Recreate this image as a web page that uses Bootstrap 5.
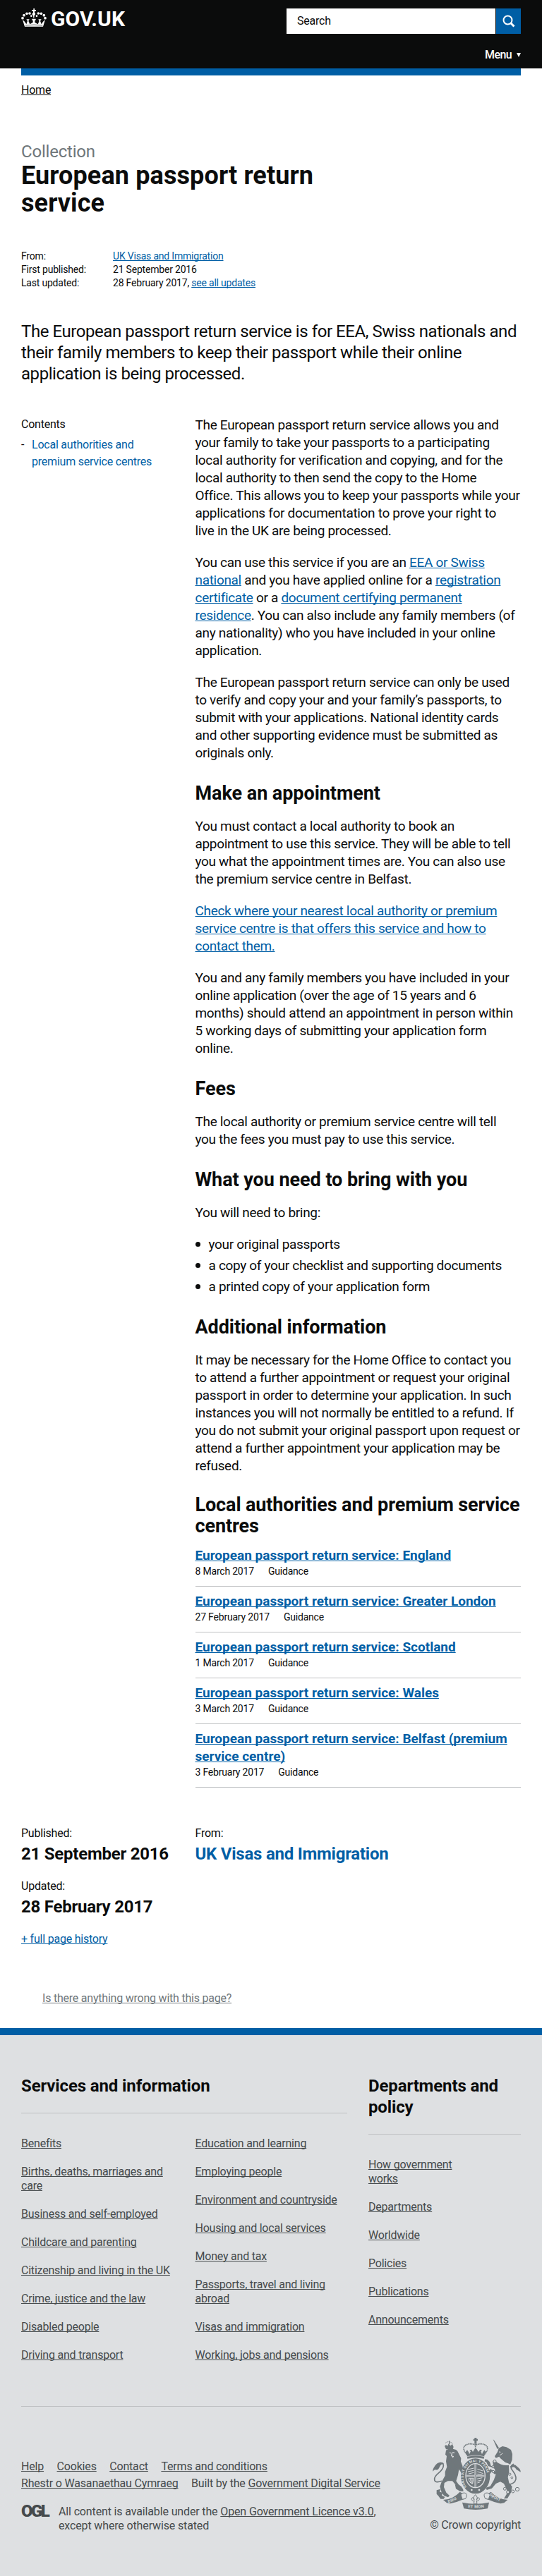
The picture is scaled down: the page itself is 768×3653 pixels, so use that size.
<!DOCTYPE html>
<html lang="en">
<head>
<meta charset="utf-8">
<meta name="viewport" content="width=device-width, initial-scale=1">
<title>European passport return service - GOV.UK</title>
<link href="https://cdn.jsdelivr.net/npm/bootstrap@5.3.0/dist/css/bootstrap.min.css" rel="stylesheet">
<script src="https://cdn.jsdelivr.net/npm/bootstrap@5.3.0/dist/js/bootstrap.bundle.min.js" defer></script>
<style>
  body { font-family: Roboto, "Liberation Sans", Arial, sans-serif; font-size: 16px; line-height: 20px; letter-spacing: -.22px; color: #0b0c0c; background: #fff; }
  a { color: #005ea5; text-decoration-skip-ink: none; text-decoration-thickness: 1px; }
  h1, h2, p, ul, dl, dd, dt { margin: 0; font-weight: inherit; }
  .wrap { margin: 0 30px; }
  .site-header { height: 97px; background: #0b0c0c; color: #fff; }
  .site-header .wrap { padding-top: 12px; }
  .wordmark { font-size: 30px; line-height: 29px; font-weight: 700; letter-spacing: .05px; margin-left: 6px; color: #fff; }
  .search-box { width: 332px; height: 36px; gap: 1px; }
  .search-input { background: #fff; color: #0b0c0c; padding: 0 15px; }
  .search-button { width: 35px; background: #005ea5; }
  .menu-toggle { margin-top: 20px; font-weight: 500; letter-spacing: -.6px; }
  .menu-arrow { width: 6px; height: 6px; margin-left: 7px; }
  .blue-bar { height: 10px; background: #005ea5; }
  .breadcrumbs { padding-top: 11px; }
  .breadcrumbs a { color: #0b0c0c; }
  .context { margin-top: 62px; font-size: 24px; line-height: 30px; color: #6f777b; letter-spacing: -.2px; }
  h1 { font-size: 36px; line-height: 39px; font-weight: 700; letter-spacing: .11px; }
  .facts { margin-top: 46px; font-size: 14px; line-height: 19px; letter-spacing: -.2px; }
  .facts dt { width: 130px; }
  .intro { margin-top: 44px; font-size: 24px; line-height: 30px; letter-spacing: -.44px; white-space: nowrap; }
  .side { width: 246.5px; flex: none; }
  .main { width: 461.5px; flex: none; white-space: nowrap; }
  .document { margin-top: 45px; }
  .contents-title { padding-top: 2px; }
  .contents-list { margin-top: 7px; line-height: 24.3px; }
  .contents-list li::before { content: "-"; display: inline-block; width: 15px; margin-left: -15px; color: #0b0c0c; }
  .contents-list li { padding-left: 15px; }
  .contents-list a { text-decoration: none; }
  .prose { font-size: 19px; line-height: 25px; letter-spacing: -.32px; }
  .prose p + p, .prose ul { margin-top: 20px; }
  .h-main { font-size: 27px; line-height: 30px; font-weight: 700; letter-spacing: -.06px; margin: 30px 0 19px; }
  .prose li { margin-bottom: 5px; padding-left: 19px; position: relative; }
  .prose li::before { content: ""; position: absolute; left: 0; top: 9px; width: 7px; height: 7px; border-radius: 50%; background: #0b0c0c; }
  .h-main.group-title { margin: 28px 0 14px; letter-spacing: -.12px; }
  .doc-item { border-bottom: 1px solid #bfc1c3; padding: 8px 0 11px; }
  .doc-item:first-child { padding-top: 0; }
  .doc-title { line-height: 25px; font-size: 19px; font-weight: 700; letter-spacing: 0; }
  .doc-facts { font-size: 14px; line-height: 20px; letter-spacing: -.2px; display: flex; gap: 20px; }
  .history { margin-top: 55px; }
  .big-fact { font-size: 24px; line-height: 30px; font-weight: 700; letter-spacing: -.24px; margin: 4px 0 21px; }
  .big-fact a { text-decoration: none; }
  .problem { margin: 64px 0 32px 60px; }
  .problem a { color: #6f777b; }
  .site-footer { border-top: 10px solid #005ea5; background: #dee0e2; color: #454a4c; padding: 57px 0 61px; white-space: nowrap; }
  .site-footer a { color: #454a4c; }
  .site-footer h2 { color: #0b0c0c; font-size: 24px; line-height: 30px; font-weight: 700; letter-spacing: -.13px; padding-bottom: 23px; border-bottom: 1px solid #bfc1c3; margin-bottom: 33px; }
  .services { width: 461.5px; }
  .policy { width: 216px; }
  .foot-links li + li { margin-top: 20px; }
  .foot-col { width: 246.5px; }
  .foot-meta { border-top: 1px solid #bfc1c3; margin-top: 62px; padding-top: 44px; }
  .meta-links { padding-top: 29px; line-height: 24px; letter-spacing: -.18px; }
  .meta-links > div { gap: 18.5px; }
  .licence { margin-top: 18px; letter-spacing: -.14px; }
  .ogl { width: 53px; font-size: 24px; font-weight: 900; letter-spacing: -2.6px; line-height: 19px; }
  .crest { width: 135px; }
  .crest svg text { font-weight: 700; letter-spacing: 1px; }
  .crest p { margin-top: 12px; }
</style>
</head>
<body>
<header class="site-header">
  <div class="wrap">
    <div class="d-flex justify-content-between align-items-start">
      <a class="d-flex text-decoration-none" href="#">
        <svg width="36" height="26" viewBox="30 36 108 78" fill="#fff">
          <path d="M45 113 36 84l9 8 7 11 5-14-5-7h13l-4 7 6 14 13-8v-7l-4-3v-5h16v5l-4 3v7l13 8 6-14-4-7h13l-5 7 5 14 7-11 9-8-9 29z"/>
          <path d="M82 36h5v6h6v5h-6v7q5 2 3 8l-4 4-1 10h-3l-1-10-4-4q-2-6 4-8v-7h-6v-5h7z"/>
          <circle cx="66" cy="57" r="5.500"/><circle cx="54" cy="58" r="5.500"/><circle cx="42" cy="65" r="5.500"/><circle cx="36" cy="77" r="5.500"/><circle cx="73" cy="68" r="4"/>
          <circle cx="103" cy="57" r="5.500"/><circle cx="115" cy="58" r="5.500"/><circle cx="127" cy="65" r="5.500"/><circle cx="132" cy="77" r="5.500"/><circle cx="96" cy="68" r="4"/>
          <path d="M48 108q36-5 73 0" stroke="#0b0c0c" stroke-width="2" fill="none"/>
        </svg>
        <span class="wordmark">GOV.UK</span>
      </a>
      <div class="search-box d-flex">
        <div class="search-input flex-grow-1 d-flex align-items-center">Search</div>
        <div class="search-button d-flex align-items-center justify-content-center">
          <svg width="18" height="18" viewBox="0 0 18 18" fill="none" stroke="#fff"><circle cx="7.500" cy="7.500" r="6" stroke-width="2"/><path d="m12 12 4.500 4.500" stroke-width="3"/></svg>
        </div>
      </div>
    </div>
    <div class="menu-toggle d-flex justify-content-end align-items-center">Menu
      <svg class="menu-arrow" viewBox="0 0 6 6"><path d="M0 0h6L3 6z" fill="#fff"/></svg>
    </div>
  </div>
</header>

<main class="wrap">
  <div class="blue-bar"></div>
  <nav class="breadcrumbs"><a href="#">Home</a></nav>
  <p class="context">Collection</p>
  <h1>European passport return<br>service</h1>

  <dl class="facts">
    <div class="d-flex"><dt>From:</dt><dd><a href="#">UK Visas and Immigration</a></dd></div>
    <div class="d-flex"><dt>First published:</dt><dd>21 September 2016</dd></div>
    <div class="d-flex"><dt>Last updated:</dt><dd>28 February 2017, <a href="#">see all updates</a></dd></div>
  </dl>

  <p class="intro">The European passport return service is for EEA, Swiss nationals and<br>their family members to keep their passport while their online<br>application is being processed.</p>

  <div class="document d-flex">
    <aside class="side">
      <p class="contents-title">Contents</p>
      <ul class="contents-list list-unstyled">
        <li><a href="#">Local authorities and<br>premium service centres</a></li>
      </ul>
    </aside>
    <article class="main">
      <div class="prose">
        <p>The European passport return service allows you and<br>your family to take your passports to a participating<br>local authority for verification and copying, and for the<br>local authority to then send the copy to the Home<br>Office. This allows you to keep your passports while your<br>applications for documentation to prove your right to<br>live in the UK are being processed.</p>
        <p>You can use this service if you are an <a href="#">EEA or Swiss<br>national</a> and you have applied online for a <a href="#">registration<br>certificate</a> or a <a href="#">document certifying permanent<br>residence</a>. You can also include any family members (of<br>any nationality) who you have included in your online<br>application.</p>
        <p>The European passport return service can only be used<br>to verify and copy your and your family’s passports, to<br>submit with your applications. National identity cards<br>and other supporting evidence must be submitted as<br>originals only.</p>
        <h2 class="h-main">Make an appointment</h2>
        <p>You must contact a local authority to book an<br>appointment to use this service. They will be able to tell<br>you what the appointment times are. You can also use<br>the premium service centre in Belfast.</p>
        <p><a href="#">Check where your nearest local authority or premium<br>service centre is that offers this service and how to<br>contact them.</a></p>
        <p>You and any family members you have included in your<br>online application (over the age of 15 years and 6<br>months) should attend an appointment in person within<br>5 working days of submitting your application form<br>online.</p>
        <h2 class="h-main">Fees</h2>
        <p>The local authority or premium service centre will tell<br>you the fees you must pay to use this service.</p>
        <h2 class="h-main">What you need to bring with you</h2>
        <p>You will need to bring:</p>
        <ul class="list-unstyled mb-0">
          <li>your original passports</li>
          <li>a copy of your checklist and supporting documents</li>
          <li>a printed copy of your application form</li>
        </ul>
        <h2 class="h-main">Additional information</h2>
        <p>It may be necessary for the Home Office to contact you<br>to attend a further appointment or request your original<br>passport in order to determine your application. In such<br>instances you will not normally be entitled to a refund. If<br>you do not submit your original passport upon request or<br>attend a further appointment your application may be<br>refused.</p>
      </div>
      <h2 class="h-main group-title">Local authorities and premium service<br>centres</h2>
      <div>
        <div class="doc-item"><div class="doc-title"><a href="#">European passport return service: England</a></div><div class="doc-facts"><span>8 March 2017</span><span>Guidance</span></div></div>
        <div class="doc-item"><div class="doc-title"><a href="#">European passport return service: Greater London</a></div><div class="doc-facts"><span>27 February 2017</span><span>Guidance</span></div></div>
        <div class="doc-item"><div class="doc-title"><a href="#">European passport return service: Scotland</a></div><div class="doc-facts"><span>1 March 2017</span><span>Guidance</span></div></div>
        <div class="doc-item"><div class="doc-title"><a href="#">European passport return service: Wales</a></div><div class="doc-facts"><span>3 March 2017</span><span>Guidance</span></div></div>
        <div class="doc-item"><div class="doc-title"><a href="#">European passport return service: Belfast (premium<br>service centre)</a></div><div class="doc-facts"><span>3 February 2017</span><span>Guidance</span></div></div>
      </div>
    </article>
  </div>

  <div class="history d-flex">
    <div class="side">
      <p>Published:</p>
      <p class="big-fact">21 September 2016</p>
      <p>Updated:</p>
      <p class="big-fact">28 February 2017</p>
      <a href="#">+ full page history</a>
    </div>
    <div>
      <p>From:</p>
      <p class="big-fact"><a href="#">UK Visas and Immigration</a></p>
    </div>
  </div>
</main>
<p class="problem"><a href="#">Is there anything wrong with this page?</a></p>

<footer class="site-footer">
  <div class="wrap">
    <div class="d-flex justify-content-between">
      <section class="services">
        <h2>Services and information</h2>
        <div class="d-flex">
          <ul class="foot-links foot-col list-unstyled">
            <li><a href="#">Benefits</a></li>
            <li><a href="#">Births, deaths, marriages and<br>care</a></li>
            <li><a href="#">Business and self-employed</a></li>
            <li><a href="#">Childcare and parenting</a></li>
            <li><a href="#">Citizenship and living in the UK</a></li>
            <li><a href="#">Crime, justice and the law</a></li>
            <li><a href="#">Disabled people</a></li>
            <li><a href="#">Driving and transport</a></li>
          </ul>
          <ul class="foot-links list-unstyled">
            <li><a href="#">Education and learning</a></li>
            <li><a href="#">Employing people</a></li>
            <li><a href="#">Environment and countryside</a></li>
            <li><a href="#">Housing and local services</a></li>
            <li><a href="#">Money and tax</a></li>
            <li><a href="#">Passports, travel and living<br>abroad</a></li>
            <li><a href="#">Visas and immigration</a></li>
            <li><a href="#">Working, jobs and pensions</a></li>
          </ul>
        </div>
      </section>
      <section class="policy">
        <h2>Departments and<br>policy</h2>
        <ul class="foot-links list-unstyled">
          <li><a href="#">How government<br>works</a></li>
          <li><a href="#">Departments</a></li>
          <li><a href="#">Worldwide</a></li>
          <li><a href="#">Policies</a></li>
          <li><a href="#">Publications</a></li>
          <li><a href="#">Announcements</a></li>
        </ul>
      </section>
    </div>

    <div class="foot-meta d-flex justify-content-between">
      <div>
        <div class="meta-links">
          <div class="d-flex"><a href="#">Help</a><a href="#">Cookies</a><a href="#">Contact</a><a href="#">Terms and conditions</a></div>
          <div class="d-flex"><a href="#">Rhestr o Wasanaethau Cymraeg</a><span>Built by the <a href="#">Government Digital Service</a></span></div>
        </div>
        <div class="licence d-flex">
          <div class="ogl">OGL</div>
          <p>All content is available under the <a href="#">Open Government Licence v3.0</a>,<br>except where otherwise stated</p>
        </div>
      </div>
      <div class="crest text-end">
        <svg class="d-block ms-auto" width="125" height="102" viewBox="69 84 375 306" fill="#6f777b">
          <defs>
            <path id="ring" d="M214 293a51 63 0 1 1 74 0"/>
            <path id="left" d="M136 361q28-6 52-31"/>
            <path id="mid" d="M200 378q50 10 108-1"/>
            <path id="right" d="M309 328q26 23 66 32"/>
          </defs>
          <!-- crown above the shield -->
          <path d="M247 84h9v5h5v8h-5v13h-9V97h-5v-8h5z"/>
          <g fill="none" stroke="#6f777b" stroke-width="5" stroke-dasharray="5 2">
            <path d="M214 154q-22-25-6-38 20-12 44-1 24-11 43 1 17 13-5 38"/><path d="M251 112v36"/>
          </g>
          <path d="M209 145l7-9 6 9 3 9 6-12-5-5 8-3 6 10 8-13h8l8 13 7-10 8 3-5 5 5 12 4-9 6-9 7 9-7 15-2 13q-36-9-70 0l-2-13z"/>
          <path d="M216 164q36-10 72 0" fill="none" stroke="#dee0e2" stroke-width="2"/>
          <!-- lion -->
          <path d="M120 119l6-5 6 5 5-10 8 9 8-7 5 12-3 10h-29z"/>
          <path d="M124 106q14-12 32 4" fill="none" stroke="#6f777b" stroke-width="3" stroke-dasharray="3 2"/>
          <path d="M138 97h4v14h-4z"/>
          <path d="M126 137q18-12 34-4 14 2 18 14l12 24-1 14 7 18 5 27-9 4-11-16-4 24-8 26 10 14 14 11 4 12-18-1-14-22-12-14-19 0-15 8-2 18 10 23 14 13-6 7-17-6-11-15-7-24 7-20 15-27 0-16 8-21-4-24 3-22-6-7z"/>
          <path d="M141 147l8 3m4-4 9 2m-10 3-3 8 5 5m4-2-4 6" stroke="#dee0e2" stroke-width="4" fill="none"/>
          <path d="M108 268q-31 11-31-8 0-12 16-25 22-17 22-33 0-13-16-11" fill="none" stroke="#6f777b" stroke-width="5"/>
          <path d="M118 193q-24-12-38 9-12 17-10 25 7-9 13-7 9 4 16-12 4-12 19-15z"/>
          <path d="M86 307l17-5-4 12 13 3-4 12 13 7-5 8h-13l-10-13-7-8z"/>
          <path d="M164 281l16 14 18 5 2 12-15-1-17-10z"/>
          <!-- unicorn -->
          <path d="M326 91l5 4 20 32-7 5z"/>
          <path d="M350 128l16-8 17 4 19 11 6 18-1 25-8 20-9-5-12-4-22-19-4-6-14 6-5-7 12-19z"/>
          <path d="M351 144l7 1m9 5-13 9" stroke="#dee0e2" stroke-width="3" fill="none"/>
          <path d="M342 179l56 22" stroke="#dee0e2" stroke-width="5"/>
          <path d="M339 185q26 20 54 15l1 28-5 24 5 23 13 17-5 25-15 25-15 1 11-18 2-19-13-27-15-8-19 8-17 20-22 7-3-10 18-6 15-26 8-22-4-26-13-7-15-5-7-16-8-4 2-9 10 2 10 10 5 16 11 3-4-23z"/>
          <path d="M314 217l-11 13 5 15 7-10 5-7 13 11 8-9z"/>
          <path d="M396 283q31-9 27-31-3-15-13-27-17-19 4-29" fill="none" stroke="#6f777b" stroke-width="5"/>
          <path d="M397 207q18-16 31-1 16 11 15 24l-9-6-9-5q-8-16-20-8z"/>
          <g fill="#dee0e2" stroke="#6f777b" stroke-width="3">
            <circle cx="333" cy="184" r="6"/><circle cx="326" cy="207" r="5"/><circle cx="327" cy="228" r="5"/><circle cx="397" cy="239" r="5"/><circle cx="406" cy="254" r="4"/>
            <circle cx="376" cy="301" r="6"/><circle cx="389" cy="315" r="6"/><circle cx="410" cy="312" r="6"/><circle cx="429" cy="303" r="8"/>
          </g>
          <!-- garter and shield -->
          <ellipse cx="251" cy="247" rx="62" ry="75"/>
          <ellipse cx="251" cy="245" rx="43" ry="53" fill="#dee0e2"/>
          <ellipse cx="251" cy="245" rx="39" ry="49"/>
          <path d="M251 196v98M212 246h78" stroke="#dee0e2" stroke-width="7"/>
          <path d="M251 196v98M212 246h78" stroke="#6f777b" stroke-width="2"/>
          <path d="M218 219l27-6m-26 15 25-5m-22 14 22-5m15-15 24 8m-24 3 25 8m-25 2 22 5m-23 16 22-5m-21 14 18-4m-18 12 12-4" stroke="#dee0e2" stroke-width="3"/>
          <path d="M223 256q18 0 20 0l-4 24q-17-5-16-24zm7 2 2 18m5-18 0 20" stroke="#dee0e2" stroke-width="3" fill="none"/>
          <g fill="#dee0e2"><circle cx="235" cy="306" r="4"/><circle cx="267" cy="306" r="4"/></g>
          <text font-size="14" fill="#dee0e2"><textPath href="#ring">HONI SOIT QUI MAL Y PENSE</textPath></text>
          <!-- motto ribbon -->
          <path d="M114 348q42-2 71-34l20 12-5 20q-26 12-56 18l-15-3z"/>
          <path d="M388 348q-42-2-71-34l-20 12 5 20q26 12 56 18l15-3z"/>
          <path d="M189 326q12-13 23-4 5 7-3 21l-14 3zM313 326q-12-13-23-4-5 7 3 21l14 3z" fill="#dee0e2" stroke="#6f777b" stroke-width="3"/>
          <path d="M195 359q56 12 114 0l-6 26q-52 10-101 0z"/>
          <path d="M251 326q13 13 5 23 1-12 9-10 8 7-4 14h-5l2 12h-14l2-12h-5q-12-7-4-14 8-2 9 10-8-10 5-23z" fill="#dee0e2" stroke="#6f777b" stroke-width="3"/>
          <g font-size="17" fill="#dee0e2">
            <text><textPath href="#left">DIEU</textPath></text>
            <text text-anchor="middle"><textPath href="#mid" startOffset="50%">ET MON</textPath></text>
            <text><textPath href="#right">DROIT</textPath></text>
          </g>
        </svg>
        <p>© Crown copyright</p>
      </div>
    </div>
  </div>
</footer>
</body>
</html>
